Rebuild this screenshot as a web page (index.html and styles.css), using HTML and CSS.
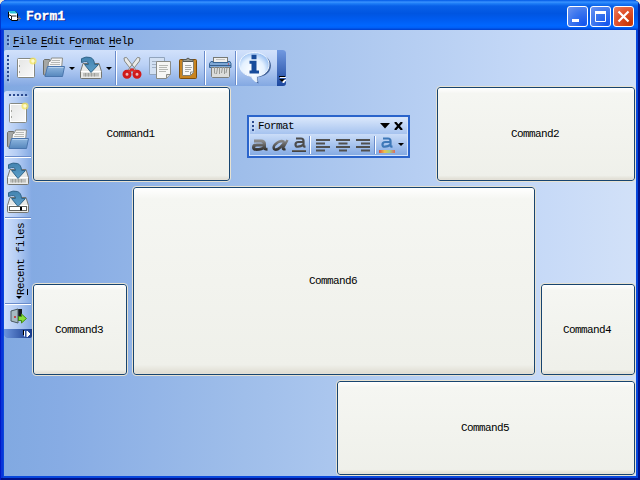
FILE: index.html
```
<!DOCTYPE html>
<html lang="en">
<head>
<meta charset="utf-8">
<title>Form1</title>
<link rel="stylesheet" href="styles.css">
</head>
<body>
<svg class="defs" aria-hidden="true">
  <defs>
    <linearGradient id="paper" x1="0" y1="0" x2="1" y2="1"><stop offset="0" stop-color="#e4e5e4"/><stop offset="1" stop-color="#fafafa"/></linearGradient>
    <linearGradient id="blue" x1="0" y1="0" x2="0" y2="1"><stop offset="0" stop-color="#8fb7df"/><stop offset="1" stop-color="#5687bd"/></linearGradient>
    <linearGradient id="arrow" x1="0" y1="0" x2="0" y2="1"><stop offset="0" stop-color="#4383b0"/><stop offset="1" stop-color="#5c9fc9"/></linearGradient>
    <radialGradient id="bubble" cx=".45" cy=".6" r=".65"><stop offset="0" stop-color="#fff"/><stop offset=".6" stop-color="#e4f1ff"/><stop offset="1" stop-color="#8db8f0"/></radialGradient>
    <linearGradient id="ink" x1="0" y1="0" x2="0" y2="1"><stop offset="0" stop-color="#8b8b8b"/><stop offset="1" stop-color="#343434"/></linearGradient>
    <symbol id="new" viewBox="0 0 24 24">
      <rect x="3.500" y="2.500" width="17" height="19" rx="1" fill="url(#paper)" stroke="#868983"/>
      <rect x="4.500" y="3.500" width="15" height="17" fill="none" stroke="#fff"/>
      <path d="M5.500 9v2M5.500 15v2" stroke="#a5a5a0"/>
      <circle cx="19" cy="5" r="3.600" fill="#f5e65b" opacity=".75"/><circle cx="19" cy="5" r="1.800" fill="#fffbd0"/>
    </symbol>
    <symbol id="open" viewBox="0 0 24 24">
      <path d="M1.500 18.500V4.500l1-1h5l1 2h7v14H3.500z" fill="#a5a7a5" stroke="#6c6e6a"/>
      <path d="M5.500 14l1-8 2-1 1-3h11l-1 11z" fill="#f5f5f5" stroke="#8a8c88"/>
      <path d="M10 4.500h8M9 6.500h9M8 8.500h10" stroke="#b7b9b6"/>
      <path d="M5.500 10.500h17l-2 10H3z" fill="url(#blue)" stroke="#4a76ae"/>
      <path d="M6.500 11.500h15" stroke="#b5d0ec"/>
    </symbol>
    <symbol id="save" viewBox="0 0 24 24">
      <path d="M4 7.500h16l2.500 8v6q0 1-1 1h-19q-1 0-1-1v-6z" fill="#e9eae8" stroke="#747672"/>
      <path d="M2 15.500h20" stroke="#fff"/>
      <rect x="4" y="17" width="16" height="3.500" fill="#bfc0bd"/>
      <path d="M6.500 17v3.500M9.500 17v3.500M12.500 17v3.500M15.500 17v3.500" stroke="#a0a29d"/>
      <path d="M2.500 6.500V2.700Q7 .1 11.500 1.500q3.800 1.400 4 7h4L12 16.500 5.500 8.500h4Q9.500 3.800 2.500 6.500z" fill="url(#arrow)" stroke="#31658a"/>
    </symbol>
    <symbol id="save-as" viewBox="0 0 24 24">
      <use href="#save"/>
      <rect x="3.500" y="16.500" width="17" height="4" fill="#fff" stroke="#60625e"/>
      <path d="M15 17v3.500" stroke="#000" stroke-width="2"/>
    </symbol>
    <symbol id="cut" viewBox="0 0 24 24">
      <path d="M4 2l2.500-.6 9.500 12.600-3 2-8.500-11zM20 2l-2.500-.6L8 14l3 2 8.500-11z" fill="#e9eae8" stroke="#878984"/>
      <ellipse cx="7" cy="18.300" rx="3" ry="3" fill="#e9b9b9" stroke="#d01a1a" stroke-width="3"/>
      <ellipse cx="17" cy="18.300" rx="3" ry="3" fill="#e9b9b9" stroke="#d01a1a" stroke-width="3"/>
      <path d="M8.500 15.500l3.500-2 3.500 2" fill="none" stroke="#d92b2b" stroke-width="2.500"/>
    </symbol>
    <symbol id="copy" viewBox="0 0 24 24">
      <path d="M1.500 1.500h15v17h-15z" fill="#d2e0f3" stroke="#91a4bd"/>
      <path d="M4 5.500h9M4 8.500h9M4 11.500h4" stroke="#a2b1c6"/>
      <path d="M8.500 5.500h14v13l-4 4h-10z" fill="#f6f6f5" stroke="#898b87"/>
      <path d="M11 9.500h9M11 11.500h8M11 13.500h9M11 15.500h7" stroke="#b6b8b4"/>
      <path d="M18.500 22v-3.500h4" fill="#ddd" stroke="#898b87"/>
    </symbol>
    <symbol id="paste" viewBox="0 0 24 24">
      <rect x="3.500" y="3.500" width="17" height="19" rx="1" fill="#c98420" stroke="#7e4d09"/>
      <path d="M6.500 5.500h11v11l-3 3h-8z" fill="#f8f8f7" stroke="#85806f"/>
      <path d="M7 5.500V3.500h3q2-3 4 0h3v2z" fill="#989b94" stroke="#555753"/>
      <path d="M9 9.500h6M9 11.500h7M9 13.500h6M9 15.500h4" stroke="#a8aaa6"/>
      <path d="M14.500 19v-3h3" fill="none" stroke="#8a8c88"/>
    </symbol>
    <symbol id="shred" viewBox="0 0 24 24">
      <rect x="5.500" y="1.500" width="14" height="6" fill="#efefee" stroke="#777975"/>
      <path d="M8 3.500h9" stroke="#c5c5c3"/>
      <path d="M3 5.500h2v1h15v-1h2l1 2v4H1.500v-4z" fill="#7fa8d5" stroke="#386697"/>
      <path d="M2 9.500h21" stroke="#365f8e"/><path d="M20 8h1" stroke="#e22"/>
      <path d="M3.500 11.500h18v9l-1 1h-16l-1-1z" fill="#dcdddb" stroke="#7e807c"/>
      <path d="M6.500 11v6l1 1M9.500 12l-1 6M11.500 11v7M14.500 11l-1 6M16.500 11v7M19 12l-1 5" fill="none" stroke="#989a96"/>
    </symbol>
    <symbol id="info" viewBox="0 0 34 34">
      <path d="M18 3C8.500 3 3 8 3 14.500c0 6.800 5 11 11.500 11.800 1 2.700 3 5 6 6.200l-1-6.200C27.500 25.500 33 21 33 14.500 33 8 26.500 3 18 3z" fill="#35558c" opacity=".85"/>
      <path d="M16.500 1.500C7.500 1.500 1.500 7 1.500 13.500S7 24.800 13.500 25.500c1 3 3 4.800 5.500 5.500l-.5-5.600C26 24.800 31 20 31 13.500S25 1.500 16.500 1.500z" fill="url(#bubble)" stroke="#eef6ff"/>
      <path d="M13.500 3.800h5v4.500h-5zM11.500 9.800H18.500v9.700h2.500v3h-9.500v-3H13.500v-6.700h-2z" fill="#164b9b"/>
    </symbol>
    <symbol id="exit" viewBox="0 0 18 18">
      <path d="M7 1h6v12H7z" fill="#171a1f"/>
      <path d="M2 3l7-2v14l-7-2z" fill="#a6bac2" stroke="#4c5b62"/>
      <circle cx="6" cy="9" r="1" fill="#c22"/>
      <path d="M9.500 8.500h3v-2.500l5 4.500-5 4.500v-2.500h-3z" fill="#86dd3a" stroke="#438e16"/>
    </symbol>
    <symbol id="left" viewBox="0 0 16 14"><path d="M1 2h14M1 5.500h9M1 9h14M1 12.500h9" stroke="#505050" stroke-width="1.900"/></symbol>
    <symbol id="center" viewBox="0 0 16 14"><path d="M1 2h14M3.500 5.500h9M1 9h14M4 12.500h8" stroke="#505050" stroke-width="1.900"/></symbol>
    <symbol id="right" viewBox="0 0 16 14"><path d="M1 2h14M6 5.500h9M1 9h14M6 12.500h9" stroke="#505050" stroke-width="1.900"/></symbol>
    <symbol id="bold-a" viewBox="0 0 18 14"><path d="M3 3h7q3.500 0 3.500 3v4q0 1.200 3 1.200M13.500 7H6Q2.500 7 2.500 9.300q0 2.200 3 2.200 5.500 0 8-2.500" fill="none" stroke="url(#ink)" stroke-width="3"/></symbol>
    <symbol id="italic-a" viewBox="0 0 18 14"><path d="M16.500 2L12 10q-.5 1.800 2.500 1M13.500 4Q10 2 6.500 4.500 1.500 8 3 11q2.500 1.800 6-1.500L14 4" fill="none" stroke="url(#ink)" stroke-width="2.500"/></symbol>
    <symbol id="thin-a" viewBox="0 0 14 12"><path d="M3 1.500h5q2.500 0 2.500 2.500v4.500q0 1.200 2 1.200M10.500 5H5.500Q2.500 5 2.500 7.500T5 9.700q3 0 5.500-2" fill="none" stroke="currentColor" stroke-width="2.200"/></symbol>
  </defs>
</svg>

<div class="window">
  <header class="titlebar">
    <svg class="app" width="14" height="12" viewBox="0 0 14 12"><path d="M1.500 1.500h7l2 2v7h-6l-3-3z" fill="#fff" stroke="#000"/><path d="M1 1h7l2.500 2.500h-7z" fill="#2cc5d8"/><path d="M1.500 4.500l3 1.500h5M4.500 6v4" stroke="#222" fill="none"/><path d="M12 6v5M10 8.500h4" stroke="#8a7870"/></svg>
    <h1>Form1</h1>
    <button class="cap"><svg viewBox="0 0 19 19"><path d="M4 13.500h7" stroke="#fff" stroke-width="3"/></svg></button>
    <button class="cap"><svg viewBox="0 0 19 19"><path d="M4 5.500h11" stroke="#fff" stroke-width="3"/><path d="M4.500 5v9.500h10V5" fill="none" stroke="#fff"/></svg></button>
    <button class="cap close"><svg viewBox="0 0 19 19"><path d="M4.500 4.500l10 10M14.500 4.500l-10 10" stroke="#fff" stroke-width="2.200"/></svg></button>
  </header>

  <main class="client">
    <nav class="menu">
      <i class="grip"></i>
      <span><u>F</u>ile</span><span><u>E</u>dit</span><span>F<u>o</u>rmat</span><span><u>H</u>elp</span>
    </nav>

    <div class="toolbar">
      <i class="grip tall"></i>
      <svg class="icon first"><use href="#new"/></svg>
      <svg class="icon open"><use href="#open"/></svg>
      <i class="caret"></i>
      <svg class="icon save"><use href="#save"/></svg>
      <i class="caret"></i>
      <i class="sep"></i>
      <svg class="icon cut"><use href="#cut"/></svg>
      <svg class="icon copy"><use href="#copy"/></svg>
      <svg class="icon paste"><use href="#paste"/></svg>
      <i class="sep"></i>
      <svg class="icon shred"><use href="#shred"/></svg>
      <i class="sep"></i>
      <svg class="info"><use href="#info"/></svg>
      <i class="overflow"><svg width="7" height="8" viewBox="0 0 7 8"><path d="M1 1.500h6M2 4h5l-2.500 3z" stroke="#fff" fill="#fff"/><path d="M0 .5h6" stroke="#000"/><path d="M0 3h6l-3 3z"/></svg></i>
    </div>

    <div class="body">
      <aside class="side">
        <i class="grip flat"></i>
        <svg class="icon"><use href="#new"/></svg>
        <svg class="icon folder"><use href="#open"/></svg>
        <i class="rule"></i>
        <svg class="icon disk"><use href="#save"/></svg>
        <svg class="icon last"><use href="#save-as"/></svg>
        <i class="rule second"></i>
        <div class="recent"><span><u>R</u>ecent files</span></div>
        <i class="caret"></i>
        <i class="rule third"></i>
        <svg class="exit"><use href="#exit"/></svg>
        <i class="overflow"><svg width="8" height="7" viewBox="0 0 8 7"><path d="M1.500 1v5.500M4 1l3 3-3 3z" stroke="#fff" fill="#fff"/><path d="M.5 0v5" stroke="#000"/></svg></i>
      </aside>
      <section class="grid">
        <button class="cmd c1">Command1</button>
        <button class="cmd c2">Command2</button>
        <button class="cmd c3">Command3</button>
        <button class="cmd c6">Command6</button>
        <button class="cmd c4">Command4</button>
        <button class="cmd c5">Command5</button>
      </section>
    </div>
  </main>

  <div class="float">
    <div class="float-title"><i class="grip"></i><span>Format</span>
      <svg class="drop" width="11" height="6"><path d="M0 0h10L5 5.500z"/></svg>
      <svg class="x" width="9" height="8"><path d="M1 0l7 8M8 0L1 8" stroke="#000" stroke-width="2.200"/></svg>
    </div>
    <div class="float-tools">
      <svg class="glyph"><use href="#bold-a"/></svg>
      <svg class="glyph"><use href="#italic-a"/></svg>
      <div class="lined dark"><svg><use href="#thin-a"/></svg><i></i></div>
      <i class="sep"></i>
      <svg class="align"><use href="#left"/></svg>
      <svg class="align"><use href="#center"/></svg>
      <svg class="align"><use href="#right"/></svg>
      <i class="sep"></i>
      <div class="lined color"><svg><use href="#thin-a"/></svg><i></i></div>
      <i class="caret"></i>
    </div>
  </div>
</div>
</body>
</html>
```
FILE: styles.css
```
* { box-sizing: border-box; }
body { margin: 0; background: #ece9d8; font: 11px/12px "Liberation Mono", monospace; letter-spacing: -.6px; color: #000; }
svg { display: block; flex: none; }
i { flex: none; font-style: normal; }
button { font: inherit; letter-spacing: inherit; padding: 0; color: #000; }
.defs { position: absolute; width: 0; height: 0; }

.window { position: relative; width: 640px; height: 480px; display: flex; flex-direction: column; padding: 0 4px 4px; border-radius: 7px 7px 0 0; overflow: hidden;
  background: #0847dc; box-shadow: inset 1px 0 #0019c8, inset -2px 0 #00138c, inset 0 -2px #00138c, inset 3px 0 #0835da; }

.titlebar { height: 30px; flex: none; margin: 0 -4px; padding: 2px 6px 0 7px; display: flex; align-items: center;
  background: linear-gradient(#0058e6 0, #3a93ff 7%, #2080f8 11%, #0860e8 20%, #0055e1 45%, #005cf0 65%, #0066ff 85%, #0060f8 92%, #003ecb 100%);
  box-shadow: inset 1px 0 #0037cf, inset -2px 0 #0024a0; }
.titlebar h1 { flex: 1; margin: 1px 0 0 5px; font: bold 13px/16px "Liberation Mono", monospace; letter-spacing: 0; color: #fff; text-shadow: 1px 1px #0a1883; -webkit-text-stroke: .3px #fff; }
.cap { width: 21px; height: 21px; margin: 1px 0 0 2px; border: 1px solid #fff; border-radius: 3px; background: radial-gradient(circle at 85% 90%, #1456ee, #3c76ee 55%, #6d94f0); }
.cap svg { width: 19px; height: 19px; }
.cap.close { background: radial-gradient(circle at 80% 85%, #c93504, #e0512b 55%, #ed8163); }

.client { flex: 1; min-height: 0; background: linear-gradient(90deg, #81a9e1 0, #87ace4 9%, #9fbeea 38%, #c4d8f7 82%, #d2e1f8 100%); display: flex; flex-direction: column; }
.grip { width: 2px; height: 11px; background: repeating-linear-gradient(#2b4a8f 0 2px, transparent 2px 4px); box-shadow: 1px 1px 0 -0.500px #ffffff80; }
.grip.tall { height: 27px; }
.grip.flat { width: 19px; height: 2px; background: repeating-linear-gradient(90deg, #2b4a8f 0 2px, transparent 2px 4px); }
.menu { height: 20px; flex: none; display: flex; align-items: center; padding: 1px 0 0 3px; gap: 4px; }
u { text-decoration-thickness: 1px; text-underline-offset: 2px; }

.toolbar { height: 36px; width: 282px; flex: none; display: flex; align-items: center; padding-left: 3px; border-radius: 2px 3px 3px 0; overflow: hidden;
  background: linear-gradient(#d1e1fb, #bcd2f6 40%, #83a8e2); }
.icon { width: 24px; height: 24px; }
.first { margin-left: 5px; }
.open { margin-left: 4px; }
.caret { width: 0; height: 0; border: 3px solid transparent; border-top-color: #000; border-bottom: 0; }
.toolbar .open + .caret { margin-left: 3px; }
.save { margin-left: 4px; }
.toolbar .save + .caret { margin-left: 3px; }
.sep { width: 2px; height: 34px; background: linear-gradient(90deg, #6a8ccb 50%, #fff 50%); }
.toolbar .sep { margin-left: 3px; }
.cut { margin-left: 3px; }
.copy { margin-left: 4px; }
.paste { margin-left: 4px; }
.toolbar .paste + .sep { margin-left: 4px; }
.shred { margin-left: 2px; }
.info { width: 34px; height: 34px; margin-left: 1px; }
.overflow { display: flex; background: linear-gradient(#7199e0, #1d489f); }
.toolbar .overflow { width: 9px; height: 36px; margin-left: auto; align-items: flex-end; padding: 0 0 2px 2px; }

.body { flex: 1; min-height: 0; display: flex; }
.side { width: 28px; height: 247px; margin-top: 5px; flex: none; display: flex; flex-direction: column; align-items: center; padding-top: 3px; border-radius: 3px 2px 2px 3px; overflow: hidden;
  background: linear-gradient(90deg, #d0e0fa, #b5cdf4 45%, #83a9e3); }
.side .icon { margin-top: 5px; }
.side .folder { margin-top: 3px; }
.side .disk { margin-top: 4px; }
.side .last { margin-top: 4px; }
.rule { flex: none; width: 26px; height: 2px; background: linear-gradient(#6a8ccb 50%, #fff 50%); margin-top: 4px; }
.rule.second { margin-top: 3px; }
.rule.third { margin-top: 4px; }
.recent { flex: none; writing-mode: vertical-rl; transform: rotate(180deg); height: 77px; padding-top: 1px; margin-left: 5px; }
.recent u { text-decoration: none; border-left: 1px solid #000; }
.side .caret { margin-left: 1px; }
.exit { width: 18px; height: 18px; margin-top: 3px; }
.side .overflow { width: 28px; height: 9px; margin-top: auto; justify-content: flex-end; padding: 1px 1px 0 0; background: linear-gradient(90deg, #6c95dd, #16398c); }

.grid { flex: 1; display: grid; grid-template-columns: 96px 99px 97px 96px 100px 96px; grid-template-rows: 96px 93px 93px 96px; gap: 4px; }
.cmd { border: 1px solid #17446f; border-radius: 3px; margin: 1px; padding-right: 2px; outline: 1px solid #e7e2d2; background: linear-gradient(#fff, #f5f6f2 6%, #eff0ea 95%, #dedbd0); box-shadow: inset 0 0 1px #fff; }
.c1 { grid-area: 1 / 1 / 2 / 3; }
.c2 { grid-area: 1 / 5 / 2 / 7; }
.c3 { grid-area: 3 / 1; }
.c6 { grid-area: 2 / 2 / 4 / 6; }
.c4 { grid-area: 3 / 6; }
.c5 { grid-area: 4 / 4 / 5 / 7; }

.float { position: absolute; left: 247px; top: 115px; width: 163px; height: 43px; border: 2px solid #2a64cb; padding: 1px; background: #d5e4fa; }
.float-title { height: 16px; display: flex; align-items: center; padding-left: 2px; background: linear-gradient(#d8e6fb, #a6c3ef); }
.float-title span { margin: 0 auto 0 4px; }
.drop { margin-right: 3px; }
.x { margin-right: 4px; }
.float-tools { height: 21px; display: flex; align-items: center; background: linear-gradient(#cbddf8, #85abe4); }
.float-tools .sep { height: 18px; margin-left: 3px; }
.glyph { width: 18px; height: 14px; margin-left: 1px; }
.glyph + .glyph { margin-left: 2px; }
.align { width: 16px; height: 14px; margin-left: 4px; }
.lined { width: 16px; margin-left: 3px; }
.lined svg { width: 14px; height: 12px; margin-left: 1px; }
.lined i { display: block; height: 3px; margin-top: 1px; }
.dark { color: #4c4c4c; width: 14px; }
.dark i { background: linear-gradient(#777, #333); height: 2px; }
.color { color: #3e78b8; }
.color i { background: linear-gradient(90deg, #df4f45, #eec14a 35%, #9fd385 65%, #e2695c); }
.float-tools .caret { margin-left: 3px; }
```
